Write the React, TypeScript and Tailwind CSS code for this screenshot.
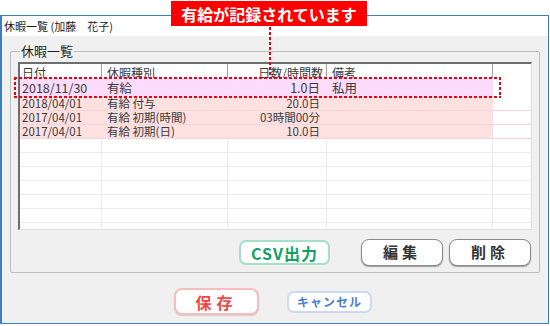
import React from "react";

interface LeaveRow {
  date: string;
  kind: string;
  amount: string;
  note: string;
}

const rows: LeaveRow[] = [
  { date: "2018/04/01", kind: "有給 付与", amount: "20.0日", note: "" },
  { date: "2017/04/01", kind: "有給 初期(時間)", amount: "03時間00分", note: "" },
  { date: "2017/04/01", kind: "有給 初期(日)", amount: "10.0日", note: "" },
];

export default function App() {
  return (
    <div className="relative w-[550px] h-[326px] overflow-hidden bg-white font-['Noto_Sans_CJK_JP',sans-serif] text-[#333]">
      {/* Window */}
      <div className="mt-[15px] flex h-[309px] w-[549px] flex-col border border-l-2 border-[#3d7fc1]">
        <div className="h-[20px] bg-white pl-[2px] text-[11px] leading-[20px] text-[#222]">休暇一覧 (加藤　花子)</div>

        <div className="flex-1 bg-[#f0f0f0]">
          {/* Group box */}
          <fieldset className="ml-[8px] mt-[7px] w-[529px] rounded-[2px] border border-[#bdbdbd] px-[7px] pb-[6px]">
            <legend className="ml-[2px] px-[1px] text-[13px] leading-[16px] text-[#222]">休暇一覧</legend>

            {/* Table */}
            <div className="mt-[3px] flex h-[168px] w-[514px] flex-col overflow-hidden border-b border-l-2 border-r border-t-2 border-b-[#dcdcdc] border-l-[#6e6e6e] border-r-[#dcdcdc] border-t-[#6e6e6e] bg-white text-[12px] text-[#3a3a3a]">
              {/* Header */}
              <div className="flex h-[14px] shrink-0 overflow-hidden leading-[17px]">
                <div className="w-[82px] border-r border-[#a0a0a0] pl-[2px]">日付</div>
                <div className="w-[126px] border-r border-[#a0a0a0] pl-[5px]">休暇種別</div>
                <div className="w-[99px] border-r border-[#a0a0a0] pr-[3px] text-right">日数/時間数</div>
                <div className="w-[166px] border-r border-[#a0a0a0] pl-[5px]">備考</div>
                <div className="flex-1" />
              </div>

              {/* Selected row */}
              <div className="flex h-[19px] shrink-0 text-[12.5px] leading-[19px]">
                <div className="w-[82px] bg-[#fcdcfb] pl-[2px]">2018/11/30</div>
                <div className="w-[126px] bg-[#fcdcfb] pl-[5px]">有給</div>
                <div className="w-[99px] bg-[#fcdcfb] pr-[7px] text-right">1.0日</div>
                <div className="w-[166px] bg-[#fcdcfb] pl-[5px]">私用</div>
                <div className="flex-1" />
              </div>

              {rows.map((r, i) => (
                <div key={i} className="flex h-[14px] shrink-0 border-b border-[#f4d4d4] text-[11.5px] leading-[13px]">
                  <div className="w-[82px] bg-[#fde0e0] pl-[2px]">{r.date}</div>
                  <div className="w-[126px] bg-[#fde0e0] pl-[5px]">{r.kind}</div>
                  <div className="w-[99px] bg-[#fde0e0] pr-[7px] text-right">{r.amount}</div>
                  <div className="w-[166px] bg-[#fde0e0] pl-[5px]">{r.note}</div>
                  <div className="flex-1 bg-white" />
                </div>
              ))}

              {Array.from({ length: 7 }).map((_, i) => (
                <div key={i} className="flex h-[14px] shrink-0 border-b border-[#ebebeb]">
                  <div className="w-[82px] border-r border-[#ebebeb]" />
                  <div className="w-[126px] border-r border-[#ebebeb]" />
                  <div className="w-[99px] border-r border-[#ebebeb]" />
                  <div className="w-[166px] border-r border-[#ebebeb]" />
                  <div className="flex-1" />
                </div>
              ))}
            </div>

            {/* Table actions */}
            <div className="mr-[1px] mt-[9px] flex h-[27px] items-center justify-end">
              <button className="mr-[31px] flex h-[25px] w-[91px] items-center justify-center rounded-[7px] border-2 border-[#a3e0c6] bg-white text-[16px] font-bold tracking-[1px] text-[#12a064]">
                CSV出力
              </button>
              <button className="mr-[6px] flex h-[27px] w-[82px] items-center justify-center rounded-[8px] border border-[#8a8a8a] bg-white text-[15px] font-bold tracking-[4px] text-[#333] shadow-[0_1px_1px_rgba(0,0,0,0.35)]">
                編集
              </button>
              <button className="flex h-[27px] w-[82px] items-center justify-center rounded-[8px] border border-[#8a8a8a] bg-white text-[15px] font-bold tracking-[4px] text-[#333] shadow-[0_1px_1px_rgba(0,0,0,0.35)]">
                削除
              </button>
            </div>
          </fieldset>

          {/* Dialog actions */}
          <div className="ml-[172px] mt-[15px] flex h-[27px] items-center gap-[28px]">
            <button className="flex h-[27px] w-[85px] items-center justify-center rounded-[8px] border-2 border-[#f7bcbc] bg-white text-[16px] font-bold tracking-[5px] text-[#f04848] shadow-[0_1px_1px_rgba(0,0,0,0.15)]">
              保存
            </button>
            <button className="flex h-[22px] w-[85px] items-center justify-center rounded-[7px] border-2 border-[#cbd9f2] bg-white text-[12px] font-bold tracking-[1px] text-[#4c7fd2]">
              キャンセル
            </button>
          </div>
        </div>
      </div>

      {/* Annotation */}
      <div className="absolute left-[171px] top-[1px] flex h-[25px] w-[196px] items-center justify-center bg-[#ff0000] text-[16px] font-bold text-white">
        有給が記録されています
      </div>
      <div className="absolute left-[269px] top-[27px] h-[50px] w-[2px] bg-[repeating-linear-gradient(to_bottom,#e60012_0_3px,transparent_3px_5px)]" />
      <div className="absolute left-[14px] top-[77px] h-[21px] w-[487px]">
        <div className="absolute left-0 top-0 h-[2px] w-full bg-[repeating-linear-gradient(to_right,#e60012_0_3px,transparent_3px_5px)]" />
        <div className="absolute bottom-0 left-0 h-[2px] w-full bg-[repeating-linear-gradient(to_right,#e60012_0_3px,transparent_3px_5px)]" />
        <div className="absolute left-0 top-0 h-full w-[2px] bg-[repeating-linear-gradient(to_bottom,#e60012_0_3px,transparent_3px_5px)]" />
        <div className="absolute right-0 top-0 h-full w-[2px] bg-[repeating-linear-gradient(to_bottom,#e60012_0_3px,transparent_3px_5px)]" />
      </div>
    </div>
  );
}
